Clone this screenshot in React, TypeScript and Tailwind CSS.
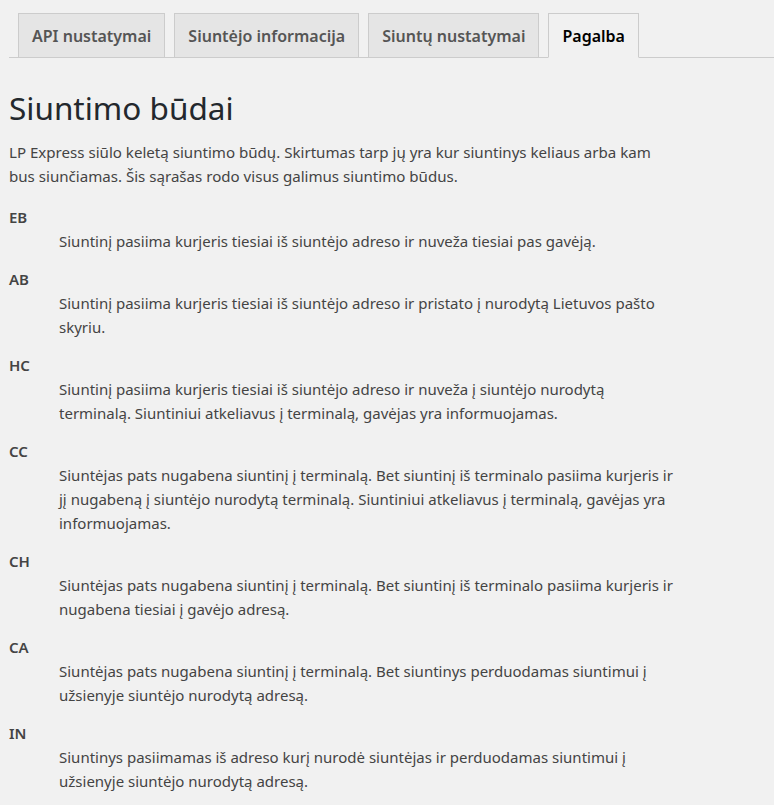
import React from 'react';

const tabs = [
  { label: 'API nustatymai', active: false },
  { label: 'Siuntėjo informacija', active: false },
  { label: 'Siuntų nustatymai', active: false },
  { label: 'Pagalba', active: true },
];

const methods: { code: string; text: string }[] = [
  { code: 'EB', text: 'Siuntinį pasiima kurjeris tiesiai iš siuntėjo adreso ir nuveža tiesiai pas gavėją.' },
  { code: 'AB', text: 'Siuntinį pasiima kurjeris tiesiai iš siuntėjo adreso ir pristato į nurodytą Lietuvos pašto skyriu.' },
  { code: 'HC', text: 'Siuntinį pasiima kurjeris tiesiai iš siuntėjo adreso ir nuveža į siuntėjo nurodytą terminalą. Siuntiniui atkeliavus į terminalą, gavėjas yra informuojamas.' },
  { code: 'CC', text: 'Siuntėjas pats nugabena siuntinį į terminalą. Bet siuntinį iš terminalo pasiima kurjeris ir jį nugabeną į siuntėjo nurodytą terminalą. Siuntiniui atkeliavus į terminalą, gavėjas yra informuojamas.' },
  { code: 'CH', text: 'Siuntėjas pats nugabena siuntinį į terminalą. Bet siuntinį iš terminalo pasiima kurjeris ir nugabena tiesiai į gavėjo adresą.' },
  { code: 'CA', text: 'Siuntėjas pats nugabena siuntinį į terminalą. Bet siuntinys perduodamas siuntimui į užsienyje siuntėjo nurodytą adresą.' },
  { code: 'IN', text: 'Siuntinys pasiimamas iš adreso kurį nurodė siuntėjas ir perduodamas siuntimui į užsienyje siuntėjo nurodytą adresą.' },
];

export default function App() {
  return (
    <div className="min-h-screen bg-[#f1f1f1] pl-[9px] pt-[13px] font-['Noto_Sans',sans-serif] text-[#444]">
      {/* Tabs */}
      <nav className="flex items-end gap-[9px] border-b border-[#ccc] pl-[9px]">
        {tabs.map((t) => (
          <div
            key={t.label}
            className={`-mb-px flex h-[45px] items-center border px-[13px] text-[16px] font-semibold ${
              t.active
                ? 'border-[#ccc] border-b-[#f1f1f1] bg-[#f1f1f1] text-black'
                : 'border-[#ccc] bg-[#e5e5e5] text-[#555]'
            }`}
          >
            {t.label}
          </div>
        ))}
      </nav>

      <div className="max-w-[670px]">
        <h1 className="mt-[30px] text-[31.5px] font-normal leading-[40px] text-[#23282d]">Siuntimo būdai</h1>
        <p className="mt-[12px] max-w-[660px] text-[15.1px] leading-[24px]">
          LP Express siūlo keletą siuntimo būdų. Skirtumas tarp jų yra kur siuntinys keliaus arba kam bus siunčiamas. Šis sąrašas rodo visus galimus siuntimo būdus.
        </p>

        <dl className="mt-[17px] text-[15px] leading-[24px]">
          {methods.map((m) => (
            <React.Fragment key={m.code}>
              <dt className="font-semibold">{m.code}</dt>
              <dd className="mb-[14px] ml-[50px]">{m.text}</dd>
            </React.Fragment>
          ))}
        </dl>
      </div>
    </div>
  );
}
